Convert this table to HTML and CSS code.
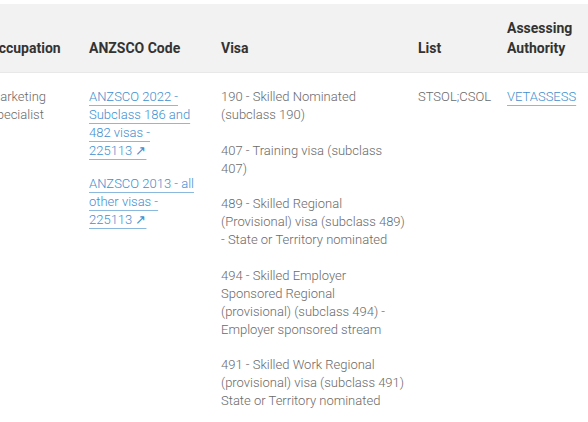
FILE: index.html
```html
<!DOCTYPE html>
<html lang="en">
<head>
<meta charset="utf-8">
<title>Occupation</title>
<link rel="stylesheet" href="styles.css">
</head>
<body>
<div class="wrap">
<table class="occ-table">
  <colgroup>
    <col class="c-occ">
    <col class="c-code">
    <col class="c-visa">
    <col class="c-list">
    <col class="c-auth">
  </colgroup>
  <thead>
    <tr>
      <th>Occupation</th>
      <th>ANZSCO Code</th>
      <th>Visa</th>
      <th>List</th>
      <th>Assessing Authority</th>
    </tr>
  </thead>
  <tbody>
    <tr>
      <td>Marketing Specialist</td>
      <td>
        <div class="code"><a href="#">ANZSCO 2022 - Subclass 186 and 482 visas - <span class="nw">225113 ↗</span></a></div>
        <div class="code"><a href="#">ANZSCO 2013 - all other visas - <span class="nw">225113 ↗</span></a></div>
      </td>
      <td>
        <p>190 - Skilled Nominated (subclass 190)</p>
        <p>407 - Training visa (subclass 407)</p>
        <p>489 - Skilled Regional (Provisional) visa (subclass 489) - State or Territory nominated</p>
        <p>494 - Skilled Employer Sponsored Regional (provisional) (subclass 494) - Employer sponsored stream</p>
        <p>491 - Skilled Work Regional (provisional) visa (subclass 491) State or Territory nominated</p>
      </td>
      <td>STSOL;CSOL</td>
      <td><a href="#">VETASSESS</a></td>
    </tr>
  </tbody>
</table>
</div>
</body>
</html>
```

FILE: styles.css
```css
html, body {
  margin: 0;
  padding: 0;
  background: #fff;
}
body {
  overflow: hidden;
  font-family: Roboto, "Liberation Sans", sans-serif;
}
.wrap {
  padding-top: 4px;
  margin-left: -19px;
}
.occ-table {
  border-collapse: collapse;
  table-layout: fixed;
  width: 630px;
}
.c-occ { width: 100px; }
.c-code { width: 132px; }
.c-visa { width: 197px; }
.c-list { width: 89px; }
.c-auth { width: 112px; }

.occ-table th {
  background: #f2f2f2;
  color: #333;
  font-weight: 700;
  font-size: 14px;
  line-height: 20px;
  text-align: left;
  vertical-align: bottom;
  padding: 14px 4px 14px 8px;
  border-bottom: 1px solid #e8e8e8;
}
.occ-table td {
  font-size: 13px;
  font-weight: 300;
  line-height: 18px;
  color: #6a6a6a;
  vertical-align: top;
  padding: 15px 4px 14px 8px;
}
.occ-table td p {
  margin: 0 0 17.5px;
}
.code {
  margin-bottom: 15px;
}
.nw {
  white-space: nowrap;
}
.occ-table a {
  color: #3f8fcf;
  text-decoration: underline;
  text-decoration-color: #8bb8dd;
  text-underline-offset: 4px;
  text-decoration-thickness: 1px;
}
```
